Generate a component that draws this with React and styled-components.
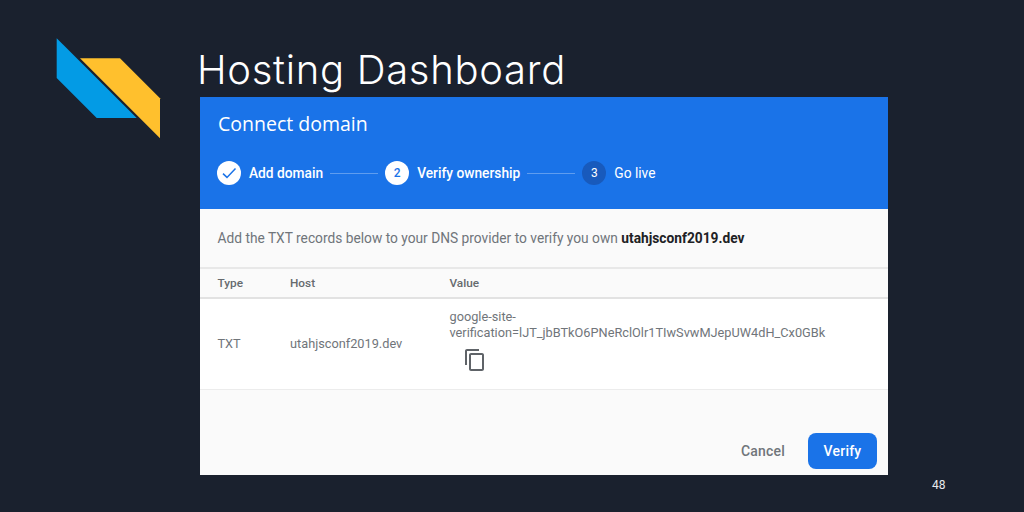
import React from "react";
import styled, { createGlobalStyle } from "styled-components";
import { MdContentCopy } from "react-icons/md";

const GlobalStyle = createGlobalStyle`
  html, body {
    margin: 0;
    padding: 0;
    background: #1a212e;
  }
  * {
    box-sizing: border-box;
  }
`;

const Slide = styled.div`
  width: 1024px;
  height: 512px;
  display: grid;
  grid-template-columns: 200px 688px 1fr;
  background: #1a212e;
  font-family: Roboto, "Liberation Sans", sans-serif;
  overflow: hidden;
`;

const LogoColumn = styled.div`
  padding: 38px 0 0 56px;
`;

const Main = styled.main`
  display: flex;
  flex-direction: column;
`;

const Title = styled.h1`
  height: 97px;
  margin: 0 0 0 -3px;
  padding-top: 45px;
  font-family: Inter, "Liberation Sans", sans-serif;
  font-size: 40px;
  line-height: 50px;
  font-weight: 300;
  letter-spacing: 0.7px;
  color: #ffffff;
  white-space: nowrap;
`;

const Card = styled.section`
  height: 378px;
  display: flex;
  flex-direction: column;
  background: #fafafa;
`;

const Header = styled.header`
  height: 112px;
  padding: 14px 17px 0;
  background: #1a73e8;
  color: #ffffff;
`;

const CardTitle = styled.h2`
  margin: 0 0 24px 1px;
  font-family: "Open Sans", Roboto, sans-serif;
  font-size: 19.5px;
  line-height: 26px;
  font-weight: 400;
`;

const Stepper = styled.div`
  display: flex;
  align-items: center;
  height: 24px;
`;

const Circle = styled.span`
  width: 24px;
  height: 24px;
  flex: none;
  display: flex;
  align-items: center;
  justify-content: center;
  border-radius: 50%;
  font-size: 12px;
  font-weight: ${(p) => (p.$pending ? 400 : 500)};
  background: ${(p) => (p.$pending ? "#185abc" : "#ffffff")};
  color: ${(p) => (p.$pending ? "#ffffff" : "#1a73e8")};
`;

const StepLabel = styled.span`
  margin-left: 8px;
  font-size: 13.75px;
  line-height: 20px;
  font-weight: ${(p) => (p.$pending ? 400 : 500)};
  white-space: nowrap;
`;

const Connector = styled.span`
  width: 48px;
  height: 1px;
  margin: 0 7px;
  background: rgba(255, 255, 255, 0.3);
`;

const Intro = styled.p`
  height: 58px;
  margin: 0;
  padding: 19px 18px 0 17.5px;
  font-size: 13.75px;
  line-height: 20px;
  color: #70757a;

  strong {
    font-weight: 700;
    color: #202124;
  }
`;

const Table = styled.table`
  width: 100%;
  border-collapse: collapse;
  table-layout: fixed;
  background: #ffffff;
`;

const HeadCell = styled.th`
  width: ${(p) => p.$width};
  height: 30px;
  padding: 0 0 0 ${(p) => p.$pad};
  text-align: left;
  font-size: 11.8px;
  font-weight: 500;
  color: #666a6e;
  background: #fafafa;
  border-top: 2px solid #e8e8e8;
  border-bottom: 2px solid #e2e2e2;
`;

const Cell = styled.td`
  height: 91px;
  padding: 0 0 0 ${(p) => p.$pad};
  font-size: 12.75px;
  line-height: 16px;
  color: #70757a;
  border-bottom: 1px solid #ececec;
`;

const ValueText = styled.div`
  width: 400px;
`;

const CopyButton = styled.span`
  display: block;
  width: 24px;
  height: 24px;
  margin: 7px 0 6px 13.5px;
  color: #5f6368;
  font-size: 24px;
  line-height: 0;
`;

const Actions = styled.footer`
  flex: 1;
  display: flex;
  justify-content: flex-end;
  align-items: flex-start;
  padding: 43.5px 11px 0 0;
`;

const TextButton = styled.span`
  height: 36px;
  margin-right: 23px;
  font-size: 14px;
  line-height: 36px;
  font-weight: 500;
  letter-spacing: 0.2px;
  color: #70757a;
`;

const PrimaryButton = styled.span`
  width: 69px;
  height: 36px;
  border-radius: 8px;
  text-align: center;
  font-size: 14px;
  line-height: 36px;
  font-weight: 500;
  letter-spacing: 0.2px;
  color: #ffffff;
  background: #1a73e8;
`;

const PageNumber = styled.div`
  align-self: end;
  padding: 0 0 20px 44px;
  font-size: 12px;
  line-height: 14px;
  color: #e8eaed;
`;

const Logo = () => (
  <svg width="106" height="102" viewBox="0 0 106 102" style={{ display: "block" }}>
    <polygon points="0.7,0.3 0.7,40 40.7,80 80.7,80" fill="#039be5" />
    <polygon points="24,20.3 64,20.3 104,60.3 104,100.3" fill="#ffc02d" />
  </svg>
);

const Check = () => (
  <svg width="18" height="18" viewBox="0 0 18 18" fill="none" stroke="#1a73e8" strokeWidth="1.5">
    <path d="M3 9.6 L7 13.4 L15.5 4.6" />
  </svg>
);

export default function App() {
  return (
    <Slide>
      <GlobalStyle />
      <LogoColumn>
        <Logo />
      </LogoColumn>
      <Main>
        <Title>Hosting Dashboard</Title>
        <Card>
          <Header>
            <CardTitle>Connect domain</CardTitle>
            <Stepper>
              <Circle>
                <Check />
              </Circle>
              <StepLabel>Add domain</StepLabel>
              <Connector />
              <Circle>2</Circle>
              <StepLabel>Verify ownership</StepLabel>
              <Connector />
              <Circle $pending>3</Circle>
              <StepLabel $pending>Go live</StepLabel>
            </Stepper>
          </Header>
          <Intro>
            Add the TXT records below to your DNS provider to verify you own{" "}
            <strong>utahjsconf2019.dev</strong>
          </Intro>
          <Table>
            <thead>
              <tr>
                <HeadCell $width="90px" $pad="17.5px">Type</HeadCell>
                <HeadCell $width="159.5px" $pad="0">Host</HeadCell>
                <HeadCell $pad="0">Value</HeadCell>
              </tr>
            </thead>
            <tbody>
              <tr>
                <Cell $pad="17.5px">TXT</Cell>
                <Cell $pad="0">utahjsconf2019.dev</Cell>
                <Cell $pad="0">
                  <ValueText>
                    google-site-verification=lJT_jbBTkO6PNeRclOlr1TIwSvwMJepUW4dH_Cx0GBk
                  </ValueText>
                  <CopyButton>
                    <MdContentCopy />
                  </CopyButton>
                </Cell>
              </tr>
            </tbody>
          </Table>
          <Actions>
            <TextButton>Cancel</TextButton>
            <PrimaryButton>Verify</PrimaryButton>
          </Actions>
        </Card>
      </Main>
      <PageNumber>48</PageNumber>
    </Slide>
  );
}
